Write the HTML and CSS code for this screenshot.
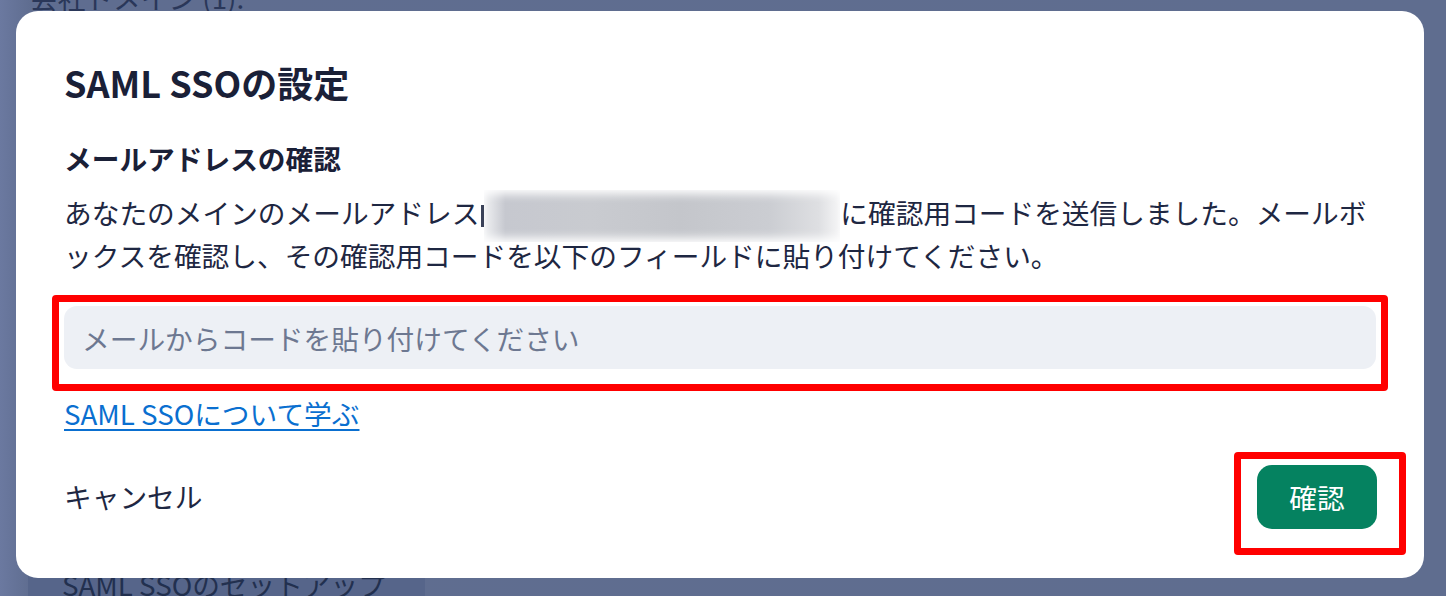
FILE: index.html
```html
<!doctype html>
<html lang="ja">
<head>
  <meta charset="utf-8">
  <title>SAML SSOの設定</title>
  <link rel="stylesheet" href="styles.css">
</head>
<body>
  <!-- 後ろのページ（オーバーレイで暗くなっている） -->
  <div class="page">
    <div class="page-top">会社ドメイン (1):</div>
    <div class="page-panel">SAML SSOのセットアップ</div>
  </div>

  <div class="modal">
    <h1 class="modal-title">SAML SSOの設定</h1>
    <h2 class="modal-sub">メールアドレスの確認</h2>
    <p class="modal-text">あなたのメインのメールアドレス<span class="mail-cut"></span><span class="mail-blur"></span>に確認用コードを送信しました。メールボ<br>ックスを確認し、その確認用コードを以下のフィールドに貼り付けてください。</p>

    <div class="mark mark-input">
      <input class="code-input" type="text" placeholder="メールからコードを貼り付けてください">
    </div>

    <a href="#" class="learn-link">SAML SSOについて学ぶ</a>

    <div class="modal-foot">
      <a href="#" class="btn-cancel">キャンセル</a>
      <div class="mark mark-btn">
        <button class="btn-ok" type="button">確認</button>
      </div>
    </div>
  </div>
</body>
</html>
```

FILE: styles.css
```css
* { margin: 0; padding: 0; box-sizing: border-box; }
html, body { height: 100%; }
body {
  font-family: "Noto Sans CJK JP", "Noto Sans", sans-serif;
  background: linear-gradient(90deg, #6b79a0 0, #5f6d90 30px, #5f6d8f 100%);
  color: #1b2440;
  overflow: hidden;
}

/* 背景のページ */
.page {
  height: 596px;
  display: flex;
  flex-direction: column;
  justify-content: space-between;
}
.page-top {
  font-size: 27.7px;
  line-height: 43px;
  margin-top: -24px;
  padding-left: 30px;
  color: #2a3759;
}
.page-panel {
  width: 397px;
  margin-left: 28px;
  height: 36px;
  padding: 6px 0 0 34px;
  background: #56658a;
  font-size: 27.7px;
  line-height: 36px;
  color: #22304f;
  white-space: nowrap;
}

/* モーダル */
.modal {
  position: fixed;
  left: 16px;
  top: 11px;
  width: 1408px;
  height: 567px;
  background: #fff;
  border-radius: 22px;
  padding: 49px 48px 0;
}
.modal-title {
  font-size: 36px;
  line-height: 44px;
  font-weight: 700;
  color: #1a2037;
}
.modal-sub {
  margin-top: 33px;
  font-size: 27.7px;
  line-height: 43px;
  font-weight: 700;
  color: #1a2037;
}
.modal-text {
  margin-top: 11px;
  font-size: 27.7px;
  line-height: 43px;
  color: #1e2742;
}
.mail-cut {
  display: inline-block;
  width: 3px;
  height: 22px;
  margin: -4px 0 -4px 2px;
  vertical-align: middle;
  background: #3a4158;
}
.mail-blur {
  display: inline-block;
  width: 356px;
  height: 52px;
  margin: -14px 0;
  vertical-align: middle;
  background: linear-gradient(90deg, #f1f2f4 0, #c6c8cf 6%, #c9cbd0 30%, #c4c6cb 55%, #cbcdd2 80%, #dedfe2 94%, #f6f6f7 100%);
  box-shadow: inset 0 8px 10px -4px #fff, inset 0 -8px 10px -4px #fff;
}

/* 赤い強調枠 */
.mark {
  border: 7px solid #ff0000;
  border-radius: 4px;
}
.mark-input {
  margin: 18px -12px 0;
  padding: 4px 5px 15px;
}
.code-input {
  display: block;
  width: 100%;
  height: 63px;
  border: none;
  outline: none;
  border-radius: 13px;
  background: #edf0f5;
  padding: 0 18px;
  font-family: inherit;
  font-size: 27.7px;
  color: #1e2742;
}
.code-input::placeholder { color: #6d7891; }

.learn-link {
  display: inline-block;
  margin-top: 1px;
  font-size: 27.7px;
  line-height: 43px;
  color: #0a6fd0;
  text-decoration: underline;
  text-underline-offset: 4px;
  text-decoration-thickness: 2px;
}

.modal-foot {
  display: flex;
  justify-content: space-between;
  align-items: flex-start;
  margin-top: 17px;
  margin-right: -30px;
}
.btn-cancel {
  margin-top: 23px;
  font-size: 27.7px;
  line-height: 43px;
  color: #1e2742;
  text-decoration: none;
}
.mark-btn {
  padding: 6px 22px 19px 16px;
}
.btn-ok {
  display: block;
  width: 120px;
  height: 64px;
  border: none;
  border-radius: 15px;
  background: #058260;
  color: #fff;
  font-family: inherit;
  font-size: 27.7px;
}
```
